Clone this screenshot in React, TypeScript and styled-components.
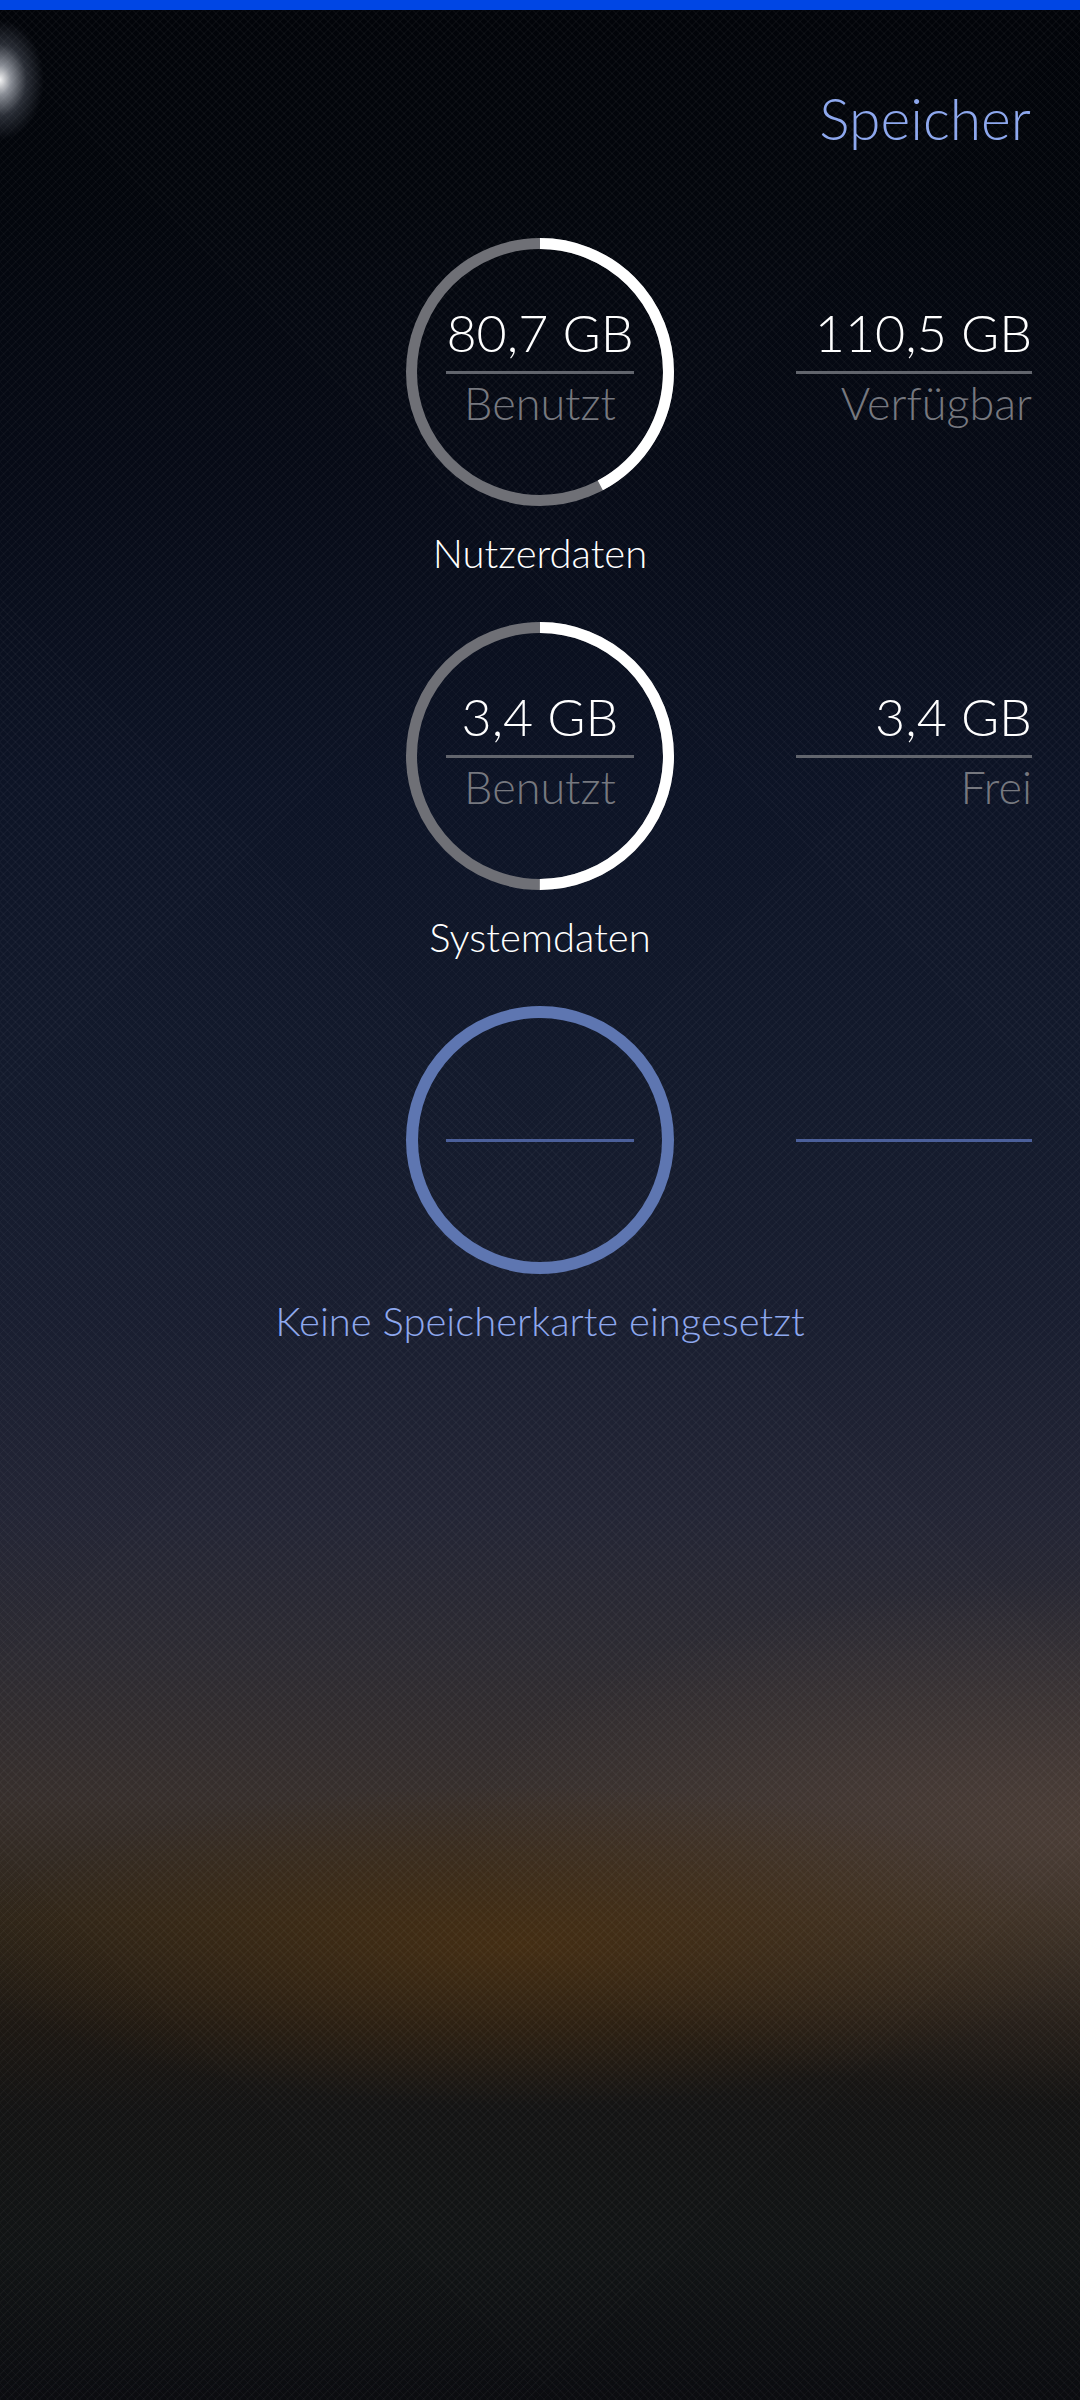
import { createGlobalStyle, styled } from 'styled-components'

const GlobalStyle = createGlobalStyle`
  html, body {
    margin: 0;
    padding: 0;
  }
  body {
    background: #05070d;
    font-family: Lato, "Open Sans", "Noto Sans", sans-serif;
  }
`

const Page = styled.div`
  width: 1080px;
  min-height: 2400px;
  display: flex;
  flex-direction: column;
  background:
    radial-gradient(ellipse 44px 60px at 0px 80px, rgba(255, 255, 255, 0.95) 0%, rgba(225, 230, 240, 0.6) 25%, rgba(190, 200, 220, 0.2) 60%, rgba(0, 0, 0, 0) 100%),
    repeating-linear-gradient(45deg, rgba(255, 255, 255, 0.028) 0 1.2px, rgba(0, 0, 0, 0) 1.2px 5.66px),
    repeating-linear-gradient(-45deg, rgba(255, 255, 255, 0.028) 0 1.2px, rgba(0, 0, 0, 0) 1.2px 5.66px),
    radial-gradient(ellipse 560px 160px at 520px 1945px, rgba(78, 50, 18, 0.7), rgba(0, 0, 0, 0)),
    radial-gradient(ellipse 620px 260px at 1080px 1840px, rgba(88, 72, 64, 0.6), rgba(0, 0, 0, 0)),
    linear-gradient(180deg, #020409 0%, #03060c 8%, #070b17 20%, #0d1426 33%, #131a2c 45%, #191e30 55%, #232535 63%, #2d2b32 69%, #372f2c 75%, #2e2519 80%, #1d1813 84.5%, #141414 88%, #111415 94%, #0b0c10 100%);
`

const TopBar = styled.div`
  height: 10px;
  background: #0046e4;
`

const Header = styled.header`
  display: flex;
  justify-content: flex-end;
  padding: 80px 49px 0 0;
`

const Title = styled.h1`
  margin: 0;
  font-size: 57px;
  line-height: 1;
  font-weight: 300;
  color: #8ea8ee;
`

const List = styled.main`
  display: flex;
  flex-direction: column;
  gap: 49px;
  padding-top: 91px;
`

const Section = styled.section`
  display: flex;
  flex-direction: column;
  align-items: center;
`

const Row = styled.div`
  width: 100%;
  display: grid;
  grid-template-columns: 1fr 268px 1fr;
`

const Ring = styled.div`
  grid-column: 2;
  display: grid;
  width: 268px;
  height: 268px;

  & > * {
    grid-area: 1 / 1;
  }
`

const Readout = styled.div<{ $align: 'center' | 'right' }>`
  display: flex;
  flex-direction: column;
  align-items: ${(p) => (p.$align === 'right' ? 'flex-end' : 'center')};
  padding-top: 68px;
`

const Value = styled.div`
  height: 52px;
  font-size: 52px;
  line-height: 1;
  font-weight: 300;
  color: #ffffff;
  white-space: nowrap;
`

const Divider = styled.div<{ $width: number; $muted?: boolean }>`
  width: ${(p) => p.$width}px;
  height: 3px;
  margin: 13px 0 7px;
  background: ${(p) => (p.$muted ? '#4b5f9a' : '#62656d')};
`

const SubLabel = styled.div`
  height: 45px;
  font-size: 45px;
  line-height: 1;
  font-weight: 300;
  color: #76787f;
  white-space: nowrap;
`

const Side = styled.div`
  grid-column: 3;
  justify-self: end;
  width: 236px;
  margin-right: 48px;
`

const Caption = styled.div<{ $accent?: boolean }>`
  margin-top: 27px;
  font-size: 40px;
  line-height: 1;
  font-weight: 300;
  color: ${(p) => (p.$accent ? '#8ea8ee' : '#ffffff')};
`

const R = 128.5
const C = 2 * Math.PI * R

const Gauge = ({ fraction, empty }: { fraction: number; empty?: boolean }) => (
  <svg width="268" height="268" viewBox="0 0 268 268">
    {empty ? (
      <circle cx="134" cy="134" r={R - 0.5} fill="none" stroke="#5e76b1" strokeWidth="12" />
    ) : (
      <>
        <circle cx="134" cy="134" r={R} fill="none" stroke="#6f7076" strokeWidth="11" />
        <circle
          cx="134"
          cy="134"
          r={R}
          fill="none"
          stroke="#ffffff"
          strokeWidth="11"
          strokeDasharray={`${fraction * C} ${C}`}
          transform="rotate(-90 134 134)"
        />
      </>
    )}
  </svg>
)

type Storage = {
  used: string
  rest: string
  restLabel: string
  fraction: number
  caption: string
  empty?: boolean
}

const storages: Storage[] = [
  { used: '80,7 GB', rest: '110,5 GB', restLabel: 'Verfügbar', fraction: 80.7 / 191.2, caption: 'Nutzerdaten' },
  { used: '3,4 GB', rest: '3,4 GB', restLabel: 'Frei', fraction: 0.5, caption: 'Systemdaten' },
  { used: '', rest: '', restLabel: '', fraction: 0, caption: 'Keine Speicherkarte eingesetzt', empty: true },
]

const App = () => {
  return (
    <Page>
      <GlobalStyle />
      <TopBar />
      <Header>
        <Title>Speicher</Title>
      </Header>
      <List>
        {storages.map((s, index) => (
          <Section key={index}>
            <Row>
              <Ring>
                <Gauge fraction={s.fraction} empty={s.empty} />
                <Readout $align="center">
                  <Value>{s.used}</Value>
                  <Divider $width={188} $muted={s.empty} />
                  <SubLabel>{s.empty ? '' : 'Benutzt'}</SubLabel>
                </Readout>
              </Ring>
              <Side>
                <Readout $align="right">
                  <Value>{s.rest}</Value>
                  <Divider $width={236} $muted={s.empty} />
                  <SubLabel>{s.restLabel}</SubLabel>
                </Readout>
              </Side>
            </Row>
            <Caption $accent={s.empty}>{s.caption}</Caption>
          </Section>
        ))}
      </List>
    </Page>
  )
}

export default App
